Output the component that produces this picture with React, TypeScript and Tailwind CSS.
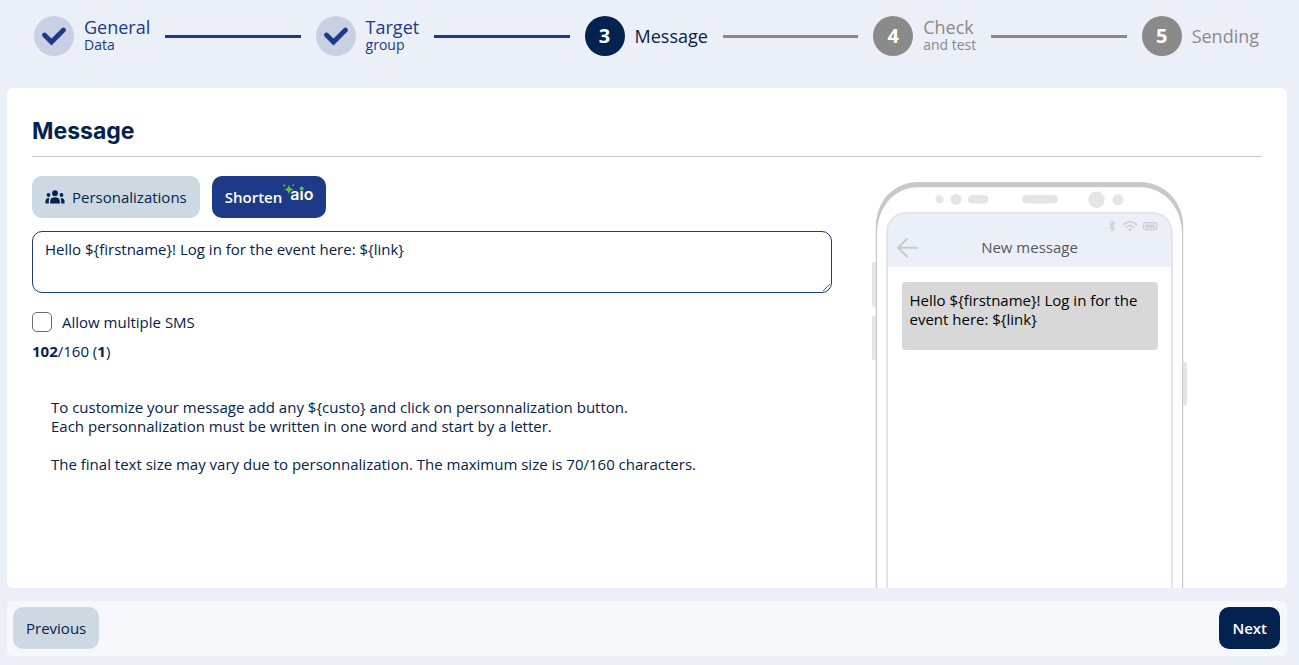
import { useState, type ReactNode } from "react";

type StepState = "done" | "current" | "todo";

interface Step {
  title: string;
  subtitle?: string;
  state: StepState;
}

const steps: Step[] = [
  { title: "General", subtitle: "Data", state: "done" },
  { title: "Target", subtitle: "group", state: "done" },
  { title: "Message", state: "current" },
  { title: "Check", subtitle: "and test", state: "todo" },
  { title: "Sending", state: "todo" },
];

const circleStyles: Record<StepState, string> = {
  done: "bg-[#c9d0e3] text-[#1c3a87]",
  current: "bg-[#03224f] text-white",
  todo: "bg-[#8a8a8a] text-white",
};

const labelStyles: Record<StepState, string> = {
  done: "text-[#1c3a87]",
  current: "text-[#03224f]",
  todo: "text-[#8a8a8a]",
};

function CheckIcon() {
  return (
    <svg className="size-10" viewBox="0 0 40 40" fill="none" stroke="currentColor" aria-hidden="true">
      <path
        d="M10.500 18.500L17.500 25.500L29.500 13.500"
        strokeWidth="4.800"
        strokeLinecap="round"
        transform="translate(0 -3) translate(0 3.500)"
      />
    </svg>
  );
}

function GroupIcon() {
  return (
    <svg className="h-4 w-5" viewBox="0 0 20 16" fill="currentColor" aria-hidden="true">
      <circle cx="10" cy="4.200" r="2.900" />
      <circle cx="3.500" cy="6" r="1.900" />
      <circle cx="16.500" cy="6" r="1.900" />
      <path d="M5.200 14.600V12.200C5.200 9.700 7.200 8.200 10 8.200C12.800 8.200 14.800 9.700 14.800 12.200V14.600Z" />
      <path d="M0.500 14.600V11.800C0.500 9.900 2.200 8.800 4.600 9C4 9.800 3.800 10.800 3.800 12V14.600Z" />
      <path d="M19.500 14.600V11.800C19.500 9.900 17.800 8.800 15.400 9C16 9.800 16.200 10.800 16.200 12V14.600Z" />
    </svg>
  );
}

function Stepper() {
  return (
    <ol className="flex items-center pt-4 pr-10 pl-[34px]">
      {steps.map((step, index) => (
        <li
          key={step.title}
          className={index < steps.length - 1 ? "flex flex-auto items-center" : "flex items-center"}
        >
          <span
            className={`flex size-10 shrink-0 items-center justify-center rounded-full text-xl font-bold ${circleStyles[step.state]}`}
          >
            {step.state === "done" ? <CheckIcon /> : index + 1}
          </span>
          <span className={`ml-[10px] whitespace-nowrap ${labelStyles[step.state]}`}>
            <span className="block text-[18px] leading-[18px]">{step.title}</span>
            {step.subtitle && <span className="block text-sm leading-[18px]">{step.subtitle}</span>}
          </span>
          {index < steps.length - 1 && (
            <span
              className={`mx-[15px] h-[3px] flex-1 ${step.state === "done" ? "bg-[#1c3a87]" : "bg-[#8a8a8a]"}`}
            />
          )}
        </li>
      ))}
    </ol>
  );
}

function AioLogo() {
  return (
    <span className="relative mb-[6px] pl-2 font-['Inter',sans-serif] text-base leading-5 font-semibold text-white">
      aio
      <svg
        className="absolute top-0 left-0 h-5 w-8"
        viewBox="0 0 32 20"
        fill="#5cc23a"
        aria-hidden="true"
      >
        <path d="M7 0.500C7.900 4 8.500 4.600 12 5.500C8.500 6.400 7.900 7 7 10.500C6.100 7 5.500 6.400 2 5.500C5.500 4.600 6.100 4 7 0.500Z" />
        <circle cx="2.300" cy="1.600" r="1.100" />
        <circle cx="11.300" cy="1.100" r="0.900" />
        <circle cx="19.700" cy="4.500" r="1.900" />
      </svg>
    </span>
  );
}

function PhoneFrame() {
  return (
    <svg
      className="absolute top-0 left-0"
      width="316"
      height="640"
      viewBox="0 0 316 640"
      fill="none"
      aria-hidden="true"
    >
      <g fill="#e5e5e5">
        <rect x="0" y="80" width="8" height="45" rx="2" />
        <rect x="0" y="133.500" width="8" height="45" rx="2" />
        <rect x="308" y="180" width="7" height="43.500" rx="2" />
      </g>
      <path d="M3.500 640V46C3.500 18 22 0 48 0H266C292 0 311.500 18 311.500 46V640Z" fill="#e5e5e5" />
      <path d="M4 640V46C4 18 22 0 48 0H266C292 0 311 18 311 46V640Z" fill="#c8c8c8" />
      <path d="M5 640V50C6 24 23 5.300 46 5.300H268C291 5.300 309 24 310 50V640Z" fill="#fff" />
      <path d="M15 85V52C15 39 23 31 36 31H279C292 31 300 39 300 52V85Z" fill="#ebeff7" />
      <path d="M15 640V52C15 39 23 31 36 31H279C292 31 300 39 300 52V640" stroke="#e5e5e5" strokeWidth="2" />
      <g fill="#e5e5e5">
        <circle cx="67.500" cy="17.300" r="4" />
        <circle cx="84" cy="17.500" r="5.500" />
        <rect x="96" y="13" width="20.500" height="8.500" rx="4.250" />
        <rect x="150" y="13" width="36" height="8.500" rx="4.250" />
        <circle cx="224.500" cy="17.800" r="8.200" />
        <circle cx="246" cy="17.800" r="5.500" />
      </g>
      <path d="M237.200 41.200L242.500 46L240 48.700V39L242.500 41.500L237.200 46.500" stroke="#d0d0d0" strokeWidth="1.300" />
      <g stroke="#d0d0d0" strokeWidth="1.700" strokeLinecap="round">
        <path d="M251.500 42.500C255.500 38.800 260.500 38.800 264.500 42.500" />
        <path d="M254.300 45.300C256.800 43 259.200 43 261.700 45.300" />
      </g>
      <circle cx="258" cy="47.600" r="1.500" fill="#d0d0d0" />
      <rect x="271.500" y="40.700" width="13.500" height="6.800" rx="2" stroke="#d0d0d0" strokeWidth="1.400" />
      <rect x="273.300" y="42.500" width="9.900" height="3.200" rx="0.500" fill="#d0d0d0" />
      <path d="M46 65.700H26M35.500 56.500L26 65.700L35.500 75" stroke="#c9c9c9" strokeWidth="1.900" />
    </svg>
  );
}

function Phone({ children }: { children: ReactNode }) {
  return (
    <div className="relative w-[316px] px-[30px] pt-[55px]">
      <PhoneFrame />
      <div className="relative">
        <h2 className="text-center text-[15px] leading-5 text-[#585858]">New message</h2>
        <p className="mt-[25px] min-h-[68px] rounded bg-[#d8d8d8] px-2 py-[9px] text-[15px] leading-[19px] text-black">
          {children}
        </p>
      </div>
    </div>
  );
}

export default function App() {
  const [message, setMessage] = useState("Hello ${firstname}! Log in for the event here: ${link}");
  const [multiple, setMultiple] = useState(false);

  return (
    <div className="flex min-h-screen flex-col bg-[#ebeff7] pr-3 pb-[9px] pl-[7px] font-['Open_Sans',sans-serif] text-[15px] text-[#03224f]">
      <header className="-mr-3 -ml-[7px] h-[88px] shrink-0">
        <Stepper />
      </header>

      <main className="flex flex-1 flex-col rounded-md bg-white px-[25px]">
        <h1 className="border-b border-[#c8c8c8] pt-[26px] pb-2 font-['Inter',sans-serif] text-[23px] leading-[34px] font-bold">
          Message
        </h1>
        <div className="flex flex-1">
          <section className="w-[65%] pt-[19px] pb-8">
            <div className="flex gap-3">
              <button
                type="button"
                className="flex h-[42px] items-center gap-[7px] rounded-[10px] bg-[#cdd9e2] px-[13px] font-medium"
              >
                <GroupIcon />
                Personalizations
              </button>
              <button
                type="button"
                className="flex h-[42px] items-center rounded-[10px] bg-[#1c3a87] px-[13px] font-semibold text-white"
              >
                Shorten
                <AioLogo />
              </button>
            </div>
            <textarea
              aria-label="Message"
              value={message}
              onChange={(event) => setMessage(event.target.value)}
              className="mt-[13px] block h-[62px] w-full rounded-[10px] border border-[#1c3a87] px-3 py-[7px] text-[15px] leading-5 font-medium outline-none"
            />
            <label className="mt-[19px] flex w-fit items-center gap-[10px] leading-5">
              <input
                type="checkbox"
                checked={multiple}
                onChange={(event) => setMultiple(event.target.checked)}
                className="size-5 appearance-none rounded-[5px] border border-[#6b6b6b] bg-white checked:bg-[#1c3a87]"
              />
              Allow multiple SMS
            </label>
            <p className="mt-[9px] leading-5">
              <b>102</b>/160 (<b>1</b>)
            </p>
            <div className="mt-[37px] space-y-[19px] pl-[19px] leading-[19px]">
              <p>
                To customize your message add any ${"{custo}"} and click on personnalization button.
                <br />
                Each personnalization must be written in one word and start by a letter.
              </p>
              <p>The final text size may vary due to personnalization. The maximum size is 70/160 characters.</p>
            </div>
          </section>
          <aside className="flex-1 overflow-hidden pt-[25px] pl-10">
            <Phone>{message}</Phone>
          </aside>
        </div>
      </main>

      <footer className="mt-[13px] flex shrink-0 justify-between rounded-md bg-[#f6f8fc] pt-[6px] pr-[7px] pb-[7px] pl-[6px]">
        <button type="button" className="h-[42px] rounded-[10px] bg-[#cdd9e2] px-[13px] font-medium">
          Previous
        </button>
        <button type="button" className="h-[42px] rounded-[10px] bg-[#03224f] px-[13px] font-semibold text-white">
          Next
        </button>
      </footer>
    </div>
  );
}
